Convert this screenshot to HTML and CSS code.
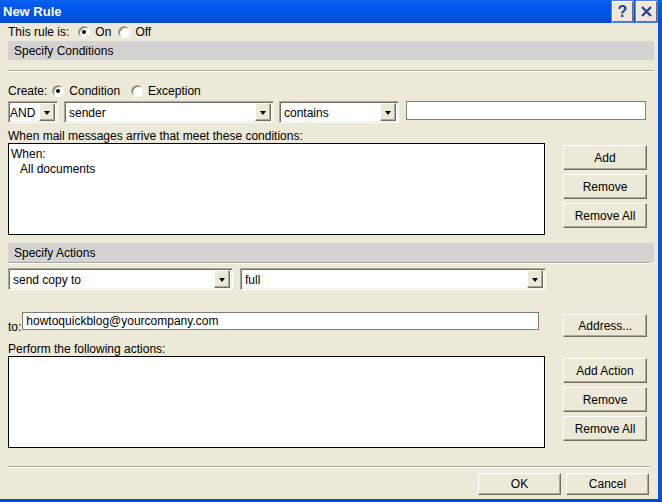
FILE: index.html
```html
<!DOCTYPE html>
<html lang="en">
<head>
    <meta charset="UTF-8">
    <title>New Rule</title>
    <link rel="stylesheet" href="styles.css">
</head>
<body>

<div class="window">
    <!-- Title bar -->
    <div class="titlebar">
        <span class="title">New Rule</span>
        <div class="title-buttons">
            <span class="tb-btn help">?</span>
            <span class="tb-btn close">
                <svg width="11" height="11" viewBox="0 0 11 11"><path d="M1 1 L10 10 M10 1 L1 10" stroke="#1d3f94" stroke-width="2.2"/></svg>
            </span>
        </div>
    </div>

    <div class="content">
        <div class="rule-state">
            <span>This rule is:</span>
            <span class="radio-item first"><span class="radio checked"></span>On</span>
            <span class="radio-item"><span class="radio"></span>Off</span>
        </div>

        <!-- Conditions -->
        <div class="band">Specify Conditions</div>
        <div class="sep sep-full"></div>

        <div class="create-row">
            <span>Create:</span>
            <span class="radio-item first"><span class="radio checked"></span>Condition</span>
            <span class="radio-item"><span class="radio"></span>Exception</span>
        </div>

        <div class="combo-row">
            <div class="combo w-and"><span class="combo-text tight">AND</span><span class="drop"></span></div>
            <div class="combo w-sender"><span class="combo-text">sender</span><span class="drop"></span></div>
            <div class="combo w-contains"><span class="combo-text">contains</span><span class="drop"></span></div>
            <div class="textbox w-value"></div>
        </div>

        <div class="caption">When mail messages arrive that meet these conditions:</div>
        <div class="list-row">
            <div class="listbox">
                <div>When:</div>
                <div class="indent">All documents</div>
            </div>
            <div class="side-buttons">
                <button class="btn">Add</button>
                <button class="btn">Remove</button>
                <button class="btn">Remove All</button>
            </div>
        </div>

        <!-- Actions -->
        <div class="band band-actions">Specify Actions</div>
        <div class="sep"></div>

        <div class="combo-row actions">
            <div class="combo w-send"><span class="combo-text">send copy to</span><span class="drop"></span></div>
            <div class="combo w-full"><span class="combo-text">full</span><span class="drop"></span></div>
        </div>

        <div class="to-row">
            <span class="to-label">to:</span>
            <div class="textbox w-to">howtoquickblog@yourcompany.com</div>
            <button class="btn address">Address...</button>
        </div>

        <div class="caption caption-actions">Perform the following actions:</div>
        <div class="list-row">
            <div class="listbox"></div>
            <div class="side-buttons">
                <button class="btn">Add Action</button>
                <button class="btn">Remove</button>
                <button class="btn">Remove All</button>
            </div>
        </div>

        <div class="sep sep-bottom"></div>
        <div class="footer">
            <button class="btn footer-btn">OK</button>
            <button class="btn footer-btn">Cancel</button>
        </div>
    </div>
</div>

</body>
</html>
```

FILE: styles.css
```css
/* Base */
body {
    margin: 0;
    font-family: "Liberation Sans", Arial, sans-serif;
    font-size: 12px;
    color: #000;
    background: #ece9d8;
}
.window {
    width: 662px;
    height: 502px;
    display: flex;
    flex-direction: column;
    background: #ece9d8;
    overflow: hidden;
}

/* Title bar */
.titlebar {
    height: 23px;
    flex: none;
    display: flex;
    align-items: center;
    padding-left: 3px;
    background: linear-gradient(#0b62f2, #0058ee 25%, #0054e3 65%, #0048d6);
}
.title {
    color: #fff;
    font-weight: bold;
    font-size: 13px;
}
.title-buttons {
    margin-left: auto;
    display: flex;
    gap: 3px;
    padding-right: 5px;
}
.tb-btn {
    width: 21px;
    height: 21px;
    box-sizing: border-box;
    display: flex;
    align-items: center;
    justify-content: center;
    background: #ece9d8;
    border: 1px solid;
    border-color: #fff #716f64 #716f64 #fff;
    box-shadow: 0 0 0 1px #4f82ee;
    color: #1d3f94;
    font-weight: bold;
    font-size: 16px;
}

/* Client area */
.content {
    flex: 1;
    display: flex;
    flex-direction: column;
    padding: 0 4px 0 8px;
    border-right: 4px solid #0d4fdc;
    border-bottom: 3px solid #0b46d4;
}
.rule-state,
.create-row {
    display: flex;
    align-items: center;
    height: 16px;
}
.rule-state {
    margin-top: 1px;
}
.create-row {
    margin-top: 11px;
}
.radio-item {
    display: flex;
    align-items: center;
    gap: 5px;
    margin-left: 7px;
}
.rule-state .radio-item.first {
    margin-left: 9px;
}
.create-row .radio-item.first {
    margin-left: 5px;
}
.create-row .radio-item {
    margin-left: 11px;
}
.radio {
    width: 12px;
    height: 12px;
    box-sizing: border-box;
    border-radius: 50%;
    background: #fff;
    border: 1px solid;
    border-color: #aca899 #fff #fff #aca899;
    box-shadow: inset 1px 1px 0 #716f64;
    position: relative;
}
.radio.checked::after {
    content: "";
    position: absolute;
    left: 3px;
    top: 3px;
    width: 4px;
    height: 4px;
    border-radius: 50%;
    background: #000;
}

/* Section bands and separators */
.band {
    margin-top: 1px;
    height: 19px;
    line-height: 21px;
    padding-left: 6px;
    background: #d4d3d1;
    overflow: hidden;
}
.band-actions {
    margin-top: 8px;
}
.sep {
    height: 0;
    border-top: 1px solid #aca899;
    border-bottom: 1px solid #fff;
    margin-right: 4px;
}
.sep-full {
    margin-top: 10px;
    margin-right: 0;
}
.sep-bottom {
    margin-top: 18px;
}

/* Combo boxes and text fields */
.combo-row {
    display: flex;
    align-items: flex-start;
    margin-top: 2px;
}
.combo-row.actions {
    margin-top: 4px;
}
.combo {
    height: 22px;
    box-sizing: border-box;
    display: flex;
    align-items: stretch;
    background: #fff;
    border: 1px solid;
    border-color: #aca899 #fff #fff #aca899;
    box-shadow: inset 1px 1px 0 #716f64, inset -1px -1px 0 #f1efe2;
    padding: 1px 2px 1px 1px;
}
.combo-text {
    flex: 1;
    line-height: 20px;
    padding-left: 3px;
    white-space: nowrap;
    overflow: hidden;
}
.combo-text.tight {
    padding-left: 0;
}
.drop {
    width: 16px;
    box-sizing: border-box;
    background: #ece9d8;
    border: 1px solid;
    border-color: #fff #716f64 #716f64 #fff;
    box-shadow: inset -1px -1px 0 #aca899;
    position: relative;
}
.drop::after {
    content: "";
    position: absolute;
    left: 4px;
    top: 7px;
    border-style: solid;
    border-width: 4px 3.5px 0;
    border-color: #000 transparent transparent;
}
.w-and { width: 50px; }
.w-sender { width: 210px; margin-left: 6px; }
.w-contains { width: 120px; margin-left: 5px; }
.w-send { width: 225px; }
.w-full { width: 306px; margin-left: 7px; }

.textbox {
    box-sizing: border-box;
    background: #fff;
    border: 1px solid #7f7d74;
    padding-left: 3px;
    white-space: nowrap;
}
.w-value {
    width: 240px;
    height: 19px;
    margin-left: 7px;
}

/* List boxes with side buttons */
.caption {
    margin-top: 6px;
    height: 14px;
    line-height: 15px;
}
.caption-actions {
    margin-top: 5px;
}
.list-row {
    display: flex;
    align-items: flex-start;
}
.listbox {
    width: 537px;
    height: 92px;
    box-sizing: border-box;
    background: #fff;
    border: 1px solid #000;
    padding: 3px 2px;
    line-height: 15px;
}
.indent {
    padding-left: 9px;
}
.side-buttons {
    display: flex;
    flex-direction: column;
    gap: 4px;
    margin-left: 18px;
    padding-top: 2px;
}
.btn {
    font: inherit;
    color: #000;
    width: 84px;
    height: 25px;
    padding: 0;
    box-sizing: border-box;
    background: #ece9d8;
    border: 1px solid;
    border-color: #fff #716f64 #716f64 #fff;
    box-shadow: inset -1px -1px 0 #aca899;
}

/* Recipient row */
.to-row {
    display: flex;
    align-items: flex-start;
    margin-top: 22px;
}
.to-label {
    margin-top: 8px;
    line-height: 14px;
}
.w-to {
    width: 517px;
    height: 18px;
    line-height: 17px;
    margin-left: 1px;
}
.address {
    margin-left: 24px;
    margin-top: 2px;
    height: 23px;
}

/* Dialog buttons */
.footer {
    display: flex;
    justify-content: flex-end;
    gap: 5px;
    margin-top: 5px;
    padding-right: 5px;
}
.footer-btn {
    width: 83px;
    height: 22px;
}
```
